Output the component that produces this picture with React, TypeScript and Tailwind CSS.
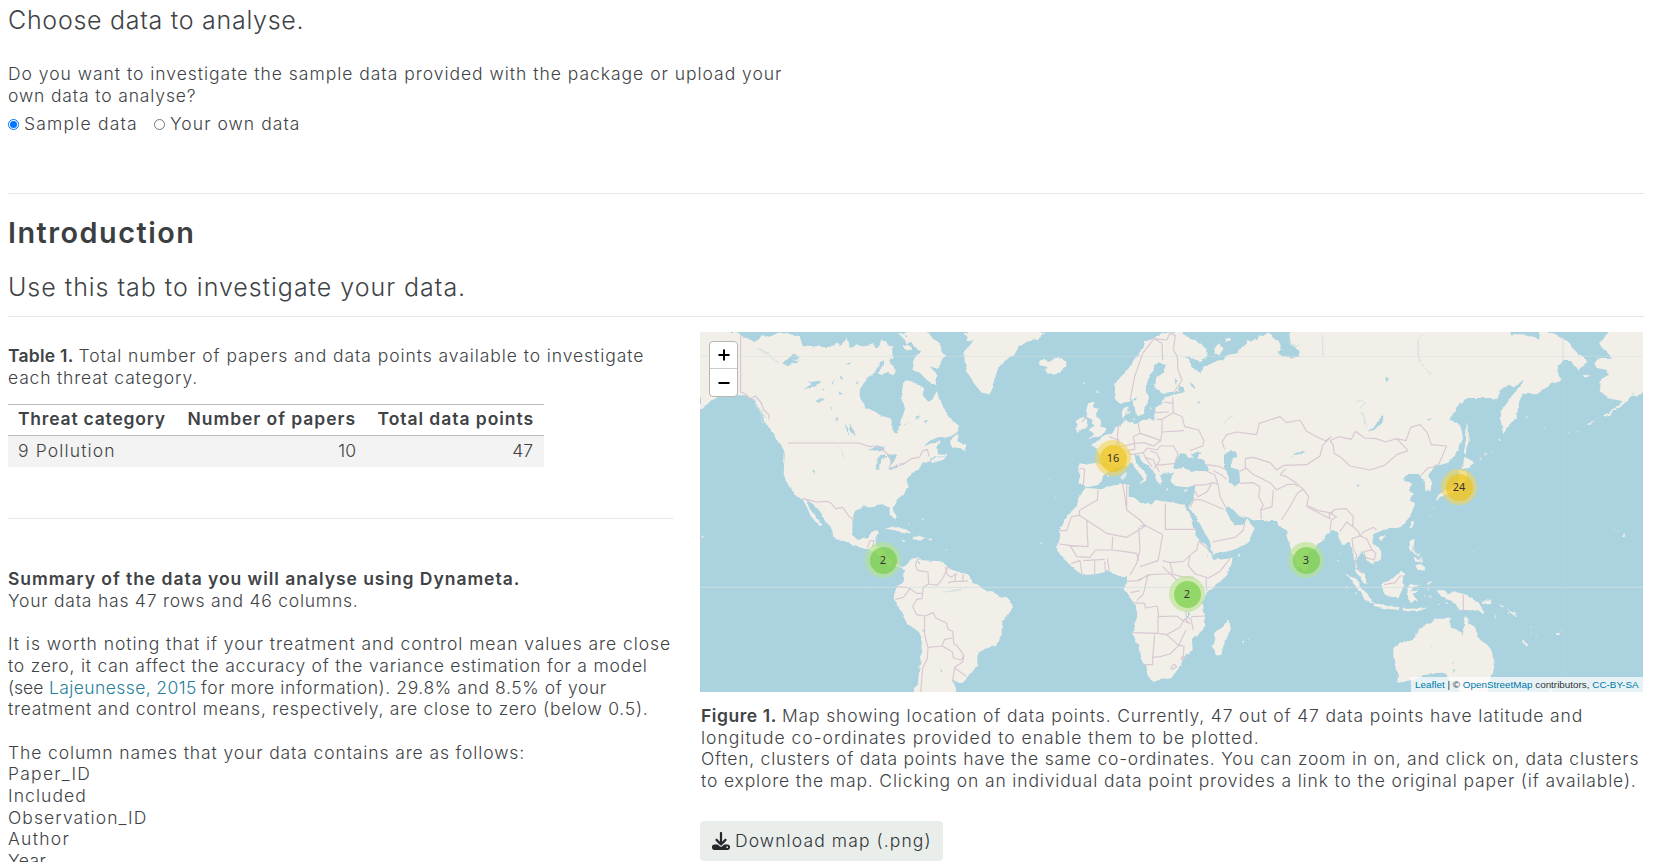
import React from "react";
import { FaDownload } from "react-icons/fa6";

const LAND: string[] = [
  // North and South America
  "M30,36 110,36 120,40 138,38 150,45 168,52 190,66 205,60 215,46 240,50 262,40 280,36 330,52 338,78 372,82 425,80 440,66 452,76 470,56 482,84 500,70 528,82 548,72 562,84 576,60 590,72 606,82 608,110 596,124 570,124 568,140 552,160 530,178 516,196 508,218 512,240 528,262 548,272 566,284 590,292 604,298 606,322 622,342 630,318 632,296 645,280 640,256 632,236 640,208 638,190 650,184 676,190 700,204 698,232 712,248 730,240 740,216 748,236 760,262 774,288 788,300 804,316 805,336 780,352 740,352 716,360 698,384 722,368 750,364 738,384 744,400 772,402 738,412 720,424 696,432 690,446 668,460 650,480 653,500 642,520 620,540 608,560 620,590 613,602 600,582 597,560 575,556 545,562 520,562 498,576 487,600 487,640 508,658 535,654 544,636 566,634 560,650 556,672 580,690 598,715 608,735 632,742 656,728 668,712 684,710 692,720 720,722 762,724 774,742 806,758 830,760 852,792 882,806 920,822 952,838 968,856 960,878 938,904 934,944 918,978 880,988 862,1004 862,1032 840,1062 820,1086 788,1084 798,1104 798,1120 668,1120 684,1086 692,1010 697,946 656,916 638,876 616,848 611,830 618,800 638,782 642,748 626,732 600,738 570,712 552,696 528,686 490,678 460,666 430,652 426,628 404,600 384,566 350,542 358,564 378,594 396,616 388,618 362,588 350,560 336,536 308,514 290,492 281,462 284,400 278,380 250,346 232,322 222,290 204,262 190,240 166,226 130,226 100,214 72,240 48,256 30,268Z",
  "M30,228 52,226 40,240 30,248Z",
  "M640,36 710,36 740,66 765,108 740,148 720,140 738,168 742,196 712,184 690,158 664,150 672,120 690,98 668,70 650,52Z",
  "M566,158 590,112 614,150 612,166 592,158 576,166Z",
  "M820,36 835,46 828,66 848,60 838,80 824,92 824,130 838,170 856,196 878,214 898,224 908,200 914,174 926,142 940,122 968,110 985,82 1020,60 1040,58 1065,36Z",
  "M784,384 780,362 806,340 802,364 826,374 826,394 808,388Z",
  "M724,424 744,412 770,404 760,416 732,430Z",
  "M584,626 610,618 636,624 664,644 640,640 612,630Z",
  "M668,648 690,646 708,656 688,662 670,656Z",
  "M634,658 648,658 646,664 636,662ZM716,656 730,656 728,661 718,661Z",
  "M664,66 656,50 640,52 650,70ZM638,76 654,92 666,88 652,72ZM628,38 640,60 646,44Z",
  // Iceland, Britain, Ireland
  "M1050,128 1062,116 1074,126 1090,120 1112,114 1126,124 1130,138 1114,152 1092,166 1066,156 1062,146 1074,142 1052,136Z",
  "M1196,246 1214,242 1208,258 1224,264 1214,284 1232,300 1234,320 1246,324 1246,338 1234,348 1194,354 1212,342 1198,330 1212,316 1206,300 1196,296 1188,270Z",
  "M1166,296 1184,290 1192,304 1188,328 1162,336 1158,326 1168,316 1160,306Z",
  // Eurasia
  "M1450,36 1420,40 1398,48 1362,64 1352,92 1328,128 1300,166 1276,190 1274,214 1278,236 1292,252 1312,244 1324,236 1328,262 1338,284 1350,290 1362,278 1370,252 1376,226 1368,208 1368,190 1382,164 1396,134 1412,124 1428,134 1420,154 1398,174 1396,204 1412,220 1440,216 1462,212 1474,218 1430,230 1418,240 1414,256 1396,262 1396,278 1390,298 1362,300 1334,312 1316,306 1300,294 1298,270 1314,260 1308,288 1302,302 1292,316 1276,322 1266,338 1246,348 1230,360 1200,378 1216,384 1234,408 1234,430 1200,434 1168,430 1168,452 1166,490 1182,492 1192,502 1218,496 1236,484 1240,466 1270,446 1304,440 1322,430 1334,446 1350,462 1362,474 1348,490 1368,482 1370,464 1358,450 1336,426 1330,402 1346,404 1358,424 1388,448 1398,480 1412,496 1420,486 1408,468 1424,458 1448,456 1446,466 1440,486 1452,498 1490,502 1514,494 1514,514 1504,548 1498,562 1516,592 1534,620 1560,668 1570,704 1640,686 1676,664 1694,624 1668,598 1660,614 1632,616 1608,570 1622,562 1650,590 1690,600 1724,600 1760,604 1774,622 1792,632 1794,660 1810,708 1822,736 1844,756 1854,742 1856,698 1900,660 1920,630 1944,640 1956,676 1978,668 1990,690 1992,730 2006,766 2022,786 2034,792 2020,760 2000,742 1998,720 2012,696 2036,724 2044,736 2072,716 2070,690 2048,662 2046,640 2070,630 2100,628 2140,612 2164,586 2172,550 2158,540 2170,524 2154,510 2168,488 2140,482 2150,462 2186,462 2204,482 2206,514 2226,516 2226,490 2216,470 2232,440 2274,428 2306,390 2318,346 2308,312 2278,296 2306,256 2330,234 2400,234 2422,236 2432,212 2456,194 2472,202 2500,180 2494,200 2464,232 2434,272 2432,300 2440,342 2458,314 2480,290 2488,244 2500,218 2544,220 2590,190 2612,184 2602,146 2620,120 2640,124 2670,152 2690,120 2660,100 2640,70 2602,46 2578,36 2550,36 2548,60 2520,46 2464,46 2460,36 1798,36 1800,60 1810,80 1832,96 1828,110 1792,114 1764,104 1772,90 1766,62 1740,44 1712,44 1700,60 1676,62 1640,96 1608,104 1600,122 1560,128 1540,140 1536,158 1510,146 1500,122 1478,106 1490,110 1530,124 1552,108 1546,84 1510,58 1480,44Z",
  "M1574,82 1588,70 1600,84 1586,106 1574,100ZM1606,54 1618,50 1624,60 1610,66Z",
  // Africa
  "M1190,504 1232,508 1270,496 1306,492 1316,500 1316,530 1350,544 1388,554 1396,540 1424,544 1460,552 1484,550 1494,574 1508,602 1520,650 1546,678 1564,706 1572,722 1622,714 1628,712 1624,734 1600,776 1548,822 1538,850 1544,878 1546,920 1506,956 1508,994 1488,1006 1476,1032 1444,1074 1388,1084 1374,1072 1366,1040 1350,1010 1344,974 1326,938 1342,884 1334,850 1304,808 1310,768 1282,768 1260,752 1220,762 1178,766 1144,736 1110,702 1104,686 1108,636 1124,596 1160,562 1166,532Z",
  "M1614,898 1622,918 1608,952 1594,1000 1578,1004 1568,980 1576,960 1572,940 1586,930 1602,918Z",
  // East and south-east Asia
  "M2330,308 2336,332 2336,360 2330,402 2322,396 2328,360Z",
  "M2326,408 2352,430 2336,440 2314,444 2320,428Z",
  "M2310,448 2326,452 2330,480 2320,508 2282,524 2250,530 2238,546 2242,524 2270,512 2296,494Z",
  "M2162,606 2170,600 2166,622 2158,624ZM2070,650 2086,644 2080,660 2070,658Z",
  "M2158,660 2174,658 2170,690 2186,700 2180,704 2160,686ZM2180,736 2198,730 2206,742 2200,756 2184,748ZM2172,712 2190,714 2196,708 2194,720 2174,722Z",
  "M1968,760 2000,780 2022,812 2044,832 2046,848 2024,838 2000,804Z",
  "M2048,850 2070,852 2100,860 2132,862 2128,870 2090,866 2052,858ZM2140,866 2190,866 2210,862 2186,876 2140,872Z",
  "M2074,792 2096,786 2120,764 2132,750 2146,758 2138,774 2142,796 2126,832 2096,830 2082,820Z",
  "M2152,808 2164,796 2196,794 2170,802 2164,814 2190,810 2168,822 2182,842 2170,838 2162,846 2156,842Z",
  "M2240,808 2266,808 2270,824 2296,814 2336,828 2366,848 2386,880 2364,870 2344,874 2306,872 2296,848 2270,838 2254,830Z",
  "M2374,848 2400,840 2408,834 2404,848 2380,852ZM2424,850 2440,860 2436,862ZM2450,866 2480,882 2476,888Z",
  "M2496,960 2518,976 2514,978 2498,966ZM2598,940 2608,938 2606,946 2598,944Z",
  // Australia
  "M2330,886 2340,912 2354,920 2362,950 2388,974 2410,1000 2414,1036 2404,1074 2388,1120 2312,1120 2304,1092 2280,1082 2262,1058 2220,1060 2184,1076 2140,1086 2122,1084 2124,1060 2110,1010 2110,980 2140,966 2172,950 2184,926 2212,910 2218,916 2236,896 2286,896 2278,922 2318,942 2324,920Z",
  "M2574,1104 2588,1110 2596,1120 2582,1118Z",
  // Alaska across the date line
  "M2750,36 2859,36 2859,220 2844,226 2824,228 2836,206 2814,240 2790,262 2746,290 2740,286 2776,266 2798,240 2780,238 2752,230 2726,214 2730,178 2760,164 2750,150 2720,144 2712,128 2730,114 2766,114 2750,96 2724,72 2744,54Z",
  "M2678,166 2694,164 2700,170 2684,172ZM2688,310 2720,300 2732,292 2700,312Z",
  "M36,646 44,646 43,651 37,650ZM2800,645 2808,643 2807,651 2801,650Z",
];

// Land that runs off the edges of the view
const EDGES =
  "M30,30H106V46H30ZM646,30H704V46H650ZM830,30H1056L1040,48H836ZM1454,30H1478V42H1454ZM1801,30H2458V44H1801ZM2554,30H2574V40H2554ZM2754,30H2859V46H2754ZM24,36H42V222H24ZM2845,36H2862V216H2845Z";

const WATER: string[] = [
  // Black Sea, Caspian, Aral, Baikal
  "M1452,448 1456,424 1472,400 1488,402 1494,414 1512,412 1502,404 1530,392 1534,398 1520,412 1542,424 1554,444 1540,454 1508,452 1480,444Z",
  "M1602,404 1622,394 1640,394 1642,406 1624,416 1626,440 1648,452 1650,488 1632,500 1618,492 1612,466 1602,440Z",
  "M1802,408 1814,398 1846,396 1840,402 1810,404Z",
  "M2078,286 2074,308 2056,326 2036,340 2036,334 2052,322 2066,300Z",
  // Great Lakes
  "M534,388 560,374 582,384 570,392 550,388ZM566,412 580,402 586,408 574,420 568,446 560,446ZM588,402 608,404 618,408 614,424 606,436 598,420ZM596,448 620,438 624,442 604,450ZM628,430 646,426 648,430 632,434Z",
  // Canadian lakes
  "M274,132 300,116 318,102 328,108 308,122 330,118 312,130 298,136ZM342,208 364,194 350,186 372,188 398,178 382,192 360,208ZM374,244 398,232 404,236 386,246ZM464,314 474,324 482,352 474,340ZM476,310 488,326 494,352 484,336ZM364,450 374,454 374,460Z",
  "M424,190 436,180 430,194ZM446,214 458,222 448,224ZM468,134 480,130 476,138ZM450,170 460,174 454,180ZM498,182 506,186 500,190ZM418,264 426,268 420,270ZM440,290 446,294 440,302ZM678,290 690,286 684,296ZM700,306 714,302 708,312ZM640,316 656,306 646,314ZM392,212 400,208 400,214Z",
  // Scandinavia, Russia and Africa
  "M1466,198 1484,204 1486,214 1470,220ZM1500,184 1514,196 1512,208 1502,198ZM1524,240 1534,246 1528,252ZM1454,176 1462,188 1456,192ZM1328,236 1342,232 1332,246Z",
  "M1494,876 1500,884 1498,900 1494,890ZM1498,866 1504,868 1500,876ZM2086,170 2098,176 2088,186ZM2212,300 2224,298 2216,306ZM2000,492 2010,496 2004,500ZM1548,704 1554,706 1550,710Z",
  "M684,722 690,728 684,730ZM750,1046 758,1048 754,1054ZM698,924 706,928 704,934ZM2222,980 2228,978 2226,982ZM2288,1026 2292,1028 2288,1032ZM2290,1046 2296,1050 2290,1060Z",
];

const RIVERS =
  "M2200,36 2184,60 2182,90 2194,130 2222,164M200,82 236,100 262,130M1606,312 1616,290 1630,288M1800,60 1816,80 1828,70M1998,244 2014,238 2026,250 2012,262M2020,276 2024,300 2030,320M760,816 800,812 830,800M440,380 456,390 462,412M186,240 216,270 M192,252 228,290 M206,262 222,310 M1896,44 1902,80 1900,104";

const BORDERS =
  "M152,46V216L166,222 182,236 196,228 212,246 222,270 238,286 236,298M294,369H506L540,380 556,378 574,388 594,402 604,424 598,444 620,440 646,428 664,416 688,412 698,392 712,388 718,410 M338,536 380,546 410,544 424,550 436,566 458,562 478,590 490,598M532,684 540,662 552,662 548,680" +
  // South America
  "M684,714 676,736 684,752 714,756 716,792 742,796 760,772 774,740M716,792 700,802 696,836 680,838 668,860 680,884 704,888 730,878 738,894 770,910 774,928 788,934 790,954 764,958 756,978 714,982 704,944 704,888M756,978 788,996 790,1014 814,1020 820,1010 818,1000 800,976 792,972 790,954M822,1006 818,1026 794,1042 788,1084M794,1044 828,1068M714,982 712,1016 698,1044 692,1120M618,800 650,802 660,806 640,832 616,838M660,806 680,820 696,820M766,740 772,764 784,772 798,760 794,784 818,784 820,762 M794,784 774,788M820,784 834,782" +
  // Scandinavia and Europe
  "M1320,240 1326,210 1334,170 1358,100 1392,56 1416,70 1418,120M1392,56 1430,60 1440,40 1456,46 1450,90 1462,110 1464,150 1476,180 1452,216M1448,232 1450,278 1476,290 1484,320 1526,330 1542,362 1538,378 1500,392M1396,278 1436,276M1400,298 1416,298 1450,278M1450,250 1420,246M1416,298 1416,336 1482,332M1344,308 1350,340 1380,350 1412,362 1416,336M1350,340 1330,350 1334,370 1362,368 1390,378 1412,362M1286,316 1282,348 1290,380 1310,376 1334,370M1258,350 1284,360 1278,388M1302,388 1324,404 1360,398 1372,384 1402,390 1410,378 1450,378 1464,402M1360,398 1366,412 1390,420 1396,436 1422,434 1454,430 1464,402M1380,392 1400,400 1410,420 1392,446M1366,412 1386,440M1168,444 1184,448 1180,494M1234,430 1270,444M1400,440 1408,456M1334,370 1334,388 1314,392M1190,290 1176,306" +
  // Middle East and central Asia
  "M1510,496 1550,494 1570,488 1584,492 1574,464 1548,452M1550,434 1590,440 1610,450M1570,452 1594,464 1610,478M1584,492 1590,530 1610,566M1514,512 1524,530 1550,516 1564,494M1500,562 1512,538 1536,540 1600,568M1568,666 1636,652 1660,630 1664,610M1604,388 1596,366 1610,344 1640,336 1700,344 1708,310 1770,290 1790,308 1830,300 1850,334 1880,350 1906,362 1924,350M1650,490 1690,488 1710,500 1706,530 1720,556 1712,570 1714,598M1650,454 1668,444 1688,462 1740,488 1760,510 1790,494 1814,492 1824,500M1666,448V416L1690,412 1740,428 1760,450 1782,436 1850,434 1890,408 1898,376 1924,350M1750,510 1746,560 1714,570M1774,600 1800,560 1822,520 1840,508 1820,490 1790,470 1770,464 1788,446M1840,508 1856,530 1850,556 1886,572 1930,580M1850,560 1920,596 1916,576M1920,362 1946,350 1984,358 1996,334 2024,354 2060,356 2086,366 2120,356 2154,392 2120,404 2084,436 2040,450 1980,438 1950,410 1932,400 1930,376 1920,362M2120,356 2148,362 2162,322 2190,314 2212,338 2224,374 2270,378 2256,410 2244,438 2214,444 2192,466" +
  // Southern and south-east Asia
  "M1920,630 1924,600 1940,590 1920,580 1936,568 1968,566 1990,590 1988,620 1970,606 1950,634M1990,620 2006,636 2010,648 1986,656 1990,690 2000,704 1994,740M2010,648 2020,636 2050,622 2060,630M2010,648 2030,656 2046,690 2058,700 2052,720 2026,712 2022,694 2046,690M2002,748 2020,760M2082,794 2116,788 2130,768 2142,768M2320,824V872" +
  // Africa
  "M1224,510 1222,540 1170,570M1168,570V586L1250,640 1310,652 1366,618 1350,600 1310,570 1310,490M1298,492 1306,540 1310,570M1168,586 1144,590 1130,632H1108M1190,600 1194,680 1130,676M1426,550V628H1520M1350,618 1366,616 1418,644M1418,644 1410,690 1404,722 1350,740M1346,622 1350,690 1340,730 1320,766M1268,650 1266,690 1300,694 1340,700 1346,722M1108,672 1140,676 1160,710 1200,712 1216,690 1266,690M1144,730 1170,722 1176,764M1214,722V762M1244,724 1246,756M1252,716 1258,752M1180,722 1244,718M1418,722 1440,728 1480,724 1500,706 1520,690 1526,664 1556,688M1500,708 1494,736 1516,762 1556,774 1590,754 1620,716M1344,780 1380,764 1418,762 1444,762 1476,770 1512,772M1550,812 1548,774M1310,784 1346,782 1374,764 1360,822 1340,842M1322,818 1350,812M1330,848 1364,850 1366,864 1402,858 1406,890 1460,888 1484,906M1404,888V940L1326,938M1404,940 1430,944 1470,922 1484,896 1500,912M1394,944 1388,1012 1410,1010 1440,1002 1466,976 1488,930M1466,976 1482,978 1480,1010M1388,1012V1034H1360M1430,944 1466,976M1474,1012 1484,1010 1480,1018 1474,1018ZM1442,1044 1452,1032 1460,1040 1448,1048ZM1488,870 1490,908 1496,908M1502,892 1510,930M1546,888 1504,890M1460,780 1418,740M1440,728 1448,760";

const DOTS: [number, number, number][] = [
  [1184, 190, 3], [1225, 216, 3], [700, 596, 2], [660, 612, 2], [760, 662, 2], [768, 690, 2], [1075, 480, 2], [1100, 536, 2],
  [1110, 640, 2], [1054, 670, 2], [1650, 704, 3], [1660, 968, 3], [1678, 962, 2], [2186, 704, 4], [2196, 722, 4], [2218, 790, 4],
  [2216, 804, 3], [2205, 828, 3], [2222, 830, 3], [2247, 852, 3], [2268, 850, 3], [2380, 876, 3], [2416, 890, 2], [2456, 880, 3],
  [2478, 888, 3], [2520, 924, 2], [2526, 940, 2], [2538, 952, 2], [2614, 930, 2], [2350, 696, 2], [2772, 628, 2], [2786, 634, 2],
  [2372, 414, 3], [2386, 404, 3], [2405, 392, 2], [2430, 360, 3], [2510, 292, 3], [2564, 322, 2], [2636, 338, 2], [2664, 332, 2],
  [2230, 560, 2], [2220, 584, 2], [1970, 800, 3], [1994, 820, 3], [1948, 700, 2], [1946, 722, 2], [2050, 846, 3], [1300, 470, 6], [1304, 462, 6], [1254, 468, 3],
  [1432, 510, 4], [1486, 512, 4], [1312, 278, 5], [1330, 296, 4], [1382, 262, 3], [547, 808, 2], [536, 802, 2],
];

const CLUSTERS = [
  { n: 16, tone: "y", pos: "left-[395px] top-[108px]" },
  { n: 24, tone: "y", pos: "left-[741px] top-[137px]" },
  { n: 2, tone: "g", pos: "left-[165px] top-[210px]" },
  { n: 2, tone: "g", pos: "left-[469px] top-[244px]" },
  { n: 3, tone: "g", pos: "left-[588px] top-[210px]" },
];

function WorldMap() {
  return (
    <div className="relative h-[360px] w-[943px] overflow-hidden bg-[#aad3df]">
      <svg className="block h-full w-full" viewBox="30 36 2829 1080" preserveAspectRatio="none">
        <filter id="coast" x="0" y="0" width="100%" height="100%" colorInterpolationFilters="sRGB">
          <feTurbulence type="fractalNoise" baseFrequency="0.035" numOctaves="3" seed="4" />
          <feDisplacementMap in="SourceGraphic" scale="15" xChannelSelector="R" yChannelSelector="G" />
        </filter>
        <g filter="url(#coast)">
          <rect x="30" y="36" width="2829" height="1080" fill="#aad3df" />
          {LAND.map((d) => <path key={d} d={d} fill="#f2efe9" />)}
          {DOTS.map(([x, y, r]) => <circle key={x + "-" + y} cx={x} cy={y} r={r} fill="#e2e8e4" />)}
          {WATER.map((d) => <path key={d} d={d} fill="#aad3df" />)}
          <path d={RIVERS} fill="none" stroke="#cfe0e2" strokeWidth="3" />
        </g>
        <path d={EDGES} fill="#f2efe9" />
        <path d={BORDERS} fill="none" stroke="#d8c8d2" strokeWidth="3.5" strokeLinejoin="round" />
        <path d="M30,109H2859" stroke="#d5dfdf" strokeWidth="3" opacity=".5" />
        <path d="M30,802H2859" stroke="#d5dfe0" strokeWidth="3" opacity=".8" />
        <path d="M2619,36V1116" stroke="#b5d5df" strokeWidth="3" opacity=".5" />
      </svg>
      {CLUSTERS.map((c) => (
        <div key={c.pos} className={`absolute flex h-9 w-9 items-center justify-center rounded-full ${c.tone === "y" ? "bg-[rgba(241,211,87,0.6)]" : "bg-[rgba(181,226,140,0.6)]"} ${c.pos}`}>
          <div className={`flex h-[27px] w-[27px] items-center justify-center rounded-full font-['Noto_Sans',sans-serif] text-[11px] font-normal text-[#333] ${c.tone === "y" ? "bg-[rgba(240,194,12,0.6)]" : "bg-[rgba(110,204,57,0.6)]"}`}>{c.n}</div>
        </div>
      ))}
      <div className="absolute left-[9px] top-[9px] flex h-[56px] w-[29px] flex-col overflow-hidden rounded-[4px] border border-[#b8b8b3] bg-white text-black">
        <button className="flex h-[27px] items-center justify-center border-b border-[#ccc]" aria-label="Zoom in">
          <svg width="12" height="12" viewBox="0 0 12 12"><path d="M6 .5v11M.5 6h11" stroke="currentColor" strokeWidth="2" /></svg>
        </button>
        <button className="flex h-[27px] items-center justify-center" aria-label="Zoom out">
          <svg width="12" height="12" viewBox="0 0 12 12"><path d="M.5 6h11" stroke="currentColor" strokeWidth="2" /></svg>
        </button>
      </div>
      <div className="absolute bottom-0 right-0 flex h-[15px] w-[232px] items-center whitespace-pre bg-white/70 pl-1 font-['Liberation_Sans',sans-serif] text-[9.9px] font-normal text-[#333]">
        <a className="text-[#0078a8]">Leaflet</a> | © <a className="text-[#0078a8]">OpenStreetMap</a> contributors, <a className="text-[#0078a8]">CC-BY-SA</a>
      </div>
    </div>
  );
}

function Radio({ on }: { on?: boolean }) {
  return (
    <span className={`flex h-[11px] w-[11px] items-center justify-center rounded-full border bg-white ${on ? "border-[#0075ff]" : "border-[#767676]"}`}>
      {on && <span className="h-[7px] w-[7px] rounded-full bg-[#0075ff]" />}
    </span>
  );
}

export default function App() {
  return (
    <div className="h-[862px] w-[1653px] overflow-hidden bg-white pl-2 font-['Inter',sans-serif] text-[17.5px] font-[360] leading-[21.67px] whitespace-nowrap text-[#404346]">
      <h4 className="pt-[5px] text-[25px] font-[340] leading-[30px] tracking-[0.72px]">Choose data to analyse.</h4>
      <div className="pt-[28px]">
        <p className="tracking-[0.98px]">Do you want to investigate the sample data provided with the package or upload your</p>
        <p className="tracking-[0.86px]">own data to analyse?</p>
      </div>
      <div className="flex pt-[7px]">
        <label className="flex w-[146px] items-center gap-[5px] tracking-[1.2px]"><Radio on />Sample data</label>
        <label className="flex items-center gap-[5px] tracking-[1.05px]"><Radio />Your own data</label>
      </div>
      <hr className="mt-[58px] w-[1636px] border-[#e6e7e7]" />
      <h2 className="mt-[22px] text-[28.8px] font-semibold leading-[34px] tracking-[1.5px] text-[#3c3f42]">Introduction</h2>
      <h4 className="mt-[22px] text-[25px] font-[340] leading-[30px] tracking-[0.97px]">Use this tab to investigate your data.</h4>
      <hr className="mt-[14px] w-[1636px] border-[#e6e7e7]" />

      <div className="flex">
        <section className="w-[692px] shrink-0 pt-[28px]">
          <p className="flex tracking-[0.92px]"><b className="w-[70.5px] font-semibold tracking-[0.25px]">Table 1.</b>Total number of papers and data points available to investigate</p>
          <p className="tracking-[0.82px]">each threat category.</p>
          <table className="mt-[16px] w-[536px] table-fixed border-collapse">
            <thead>
              <tr className="h-[31px] border-y border-[#b9babb] text-right">
                <th className="w-[168px] pb-[3px] pl-[10px] text-left font-semibold tracking-[0.8px]">Threat category</th>
                <th className="w-[180px] pb-[3px] font-semibold tracking-[0.95px]">Number of papers</th>
                <th className="pb-[3px] pr-[10px] font-semibold tracking-[0.95px]">Total data points</th>
              </tr>
            </thead>
            <tbody>
              <tr className="h-[31px] bg-[#f3f3f3] text-right">
                <td className="pb-[1px] pl-[10px] text-left tracking-[1.15px]">9 Pollution</td>
                <td className="pb-[1px]">10</td>
                <td className="pb-[1px] pr-[11px]">47</td>
              </tr>
            </tbody>
          </table>
          <hr className="mt-[51px] w-[665px] border-[#e6e7e7]" />
          <div className="pt-[49.5px]">
            <p className="font-semibold tracking-[0.96px]">Summary of the data you will analyse using Dynameta.</p>
            <p className="tracking-[0.77px]">Your data has 47 rows and 46 columns.</p>
            <br />
            <p className="tracking-[0.94px]">It is worth noting that if your treatment and control mean values are close</p>
            <p className="tracking-[0.77px]">to zero, it can affect the accuracy of the variance estimation for a model</p>
            <p className="flex"><span className="w-[41px]">(see</span><a className="w-[152px] tracking-[0.4px] text-[#27809b]">Lajeunesse, 2015</a><span className="tracking-[0.6px]">for more information). 29.8% and 8.5% of your</span></p>
            <p className="tracking-[0.73px]">treatment and control means, respectively, are close to zero (below 0.5).</p>
            <br />
            <p className="tracking-[0.88px]">The column names that your data contains are as follows:</p>
            <p className="tracking-[1.25px]">Paper_ID</p>
            <p className="tracking-[1.08px]">Included</p>
            <p className="tracking-[1.08px]">Observation_ID</p>
            <p className="tracking-[1.3px]">Author</p>
            <p className="tracking-[0.4px]">Year</p>
          </div>
        </section>

        <section className="pt-[15px]">
          <WorldMap />
          <div className="pl-[1px] pt-[13px]">
            <p className="flex tracking-[0.85px]"><b className="w-[81px] font-semibold tracking-[0.55px]">Figure 1.</b>Map showing location of data points. Currently, 47 out of 47 data points have latitude and</p>
            <p className="tracking-[1px]">longitude co-ordinates provided to enable them to be plotted.</p>
            <p className="tracking-[0.76px]">Often, clusters of data points have the same co-ordinates. You can zoom in on, and click on, data clusters</p>
            <p className="tracking-[0.85px]">to explore the map. Clicking on an individual data point provides a link to the original paper (if available).</p>
          </div>
          <button className="mt-[29px] flex h-[40px] w-[243px] items-center rounded-[4px] bg-[#e9eeeb] pl-[12px] tracking-[1.1px] text-[#303538]">
            <FaDownload className="mr-[5px] h-[18px] w-[18px] text-[#25282b]" />Download map (.png)
          </button>
        </section>
      </div>
    </div>
  );
}
